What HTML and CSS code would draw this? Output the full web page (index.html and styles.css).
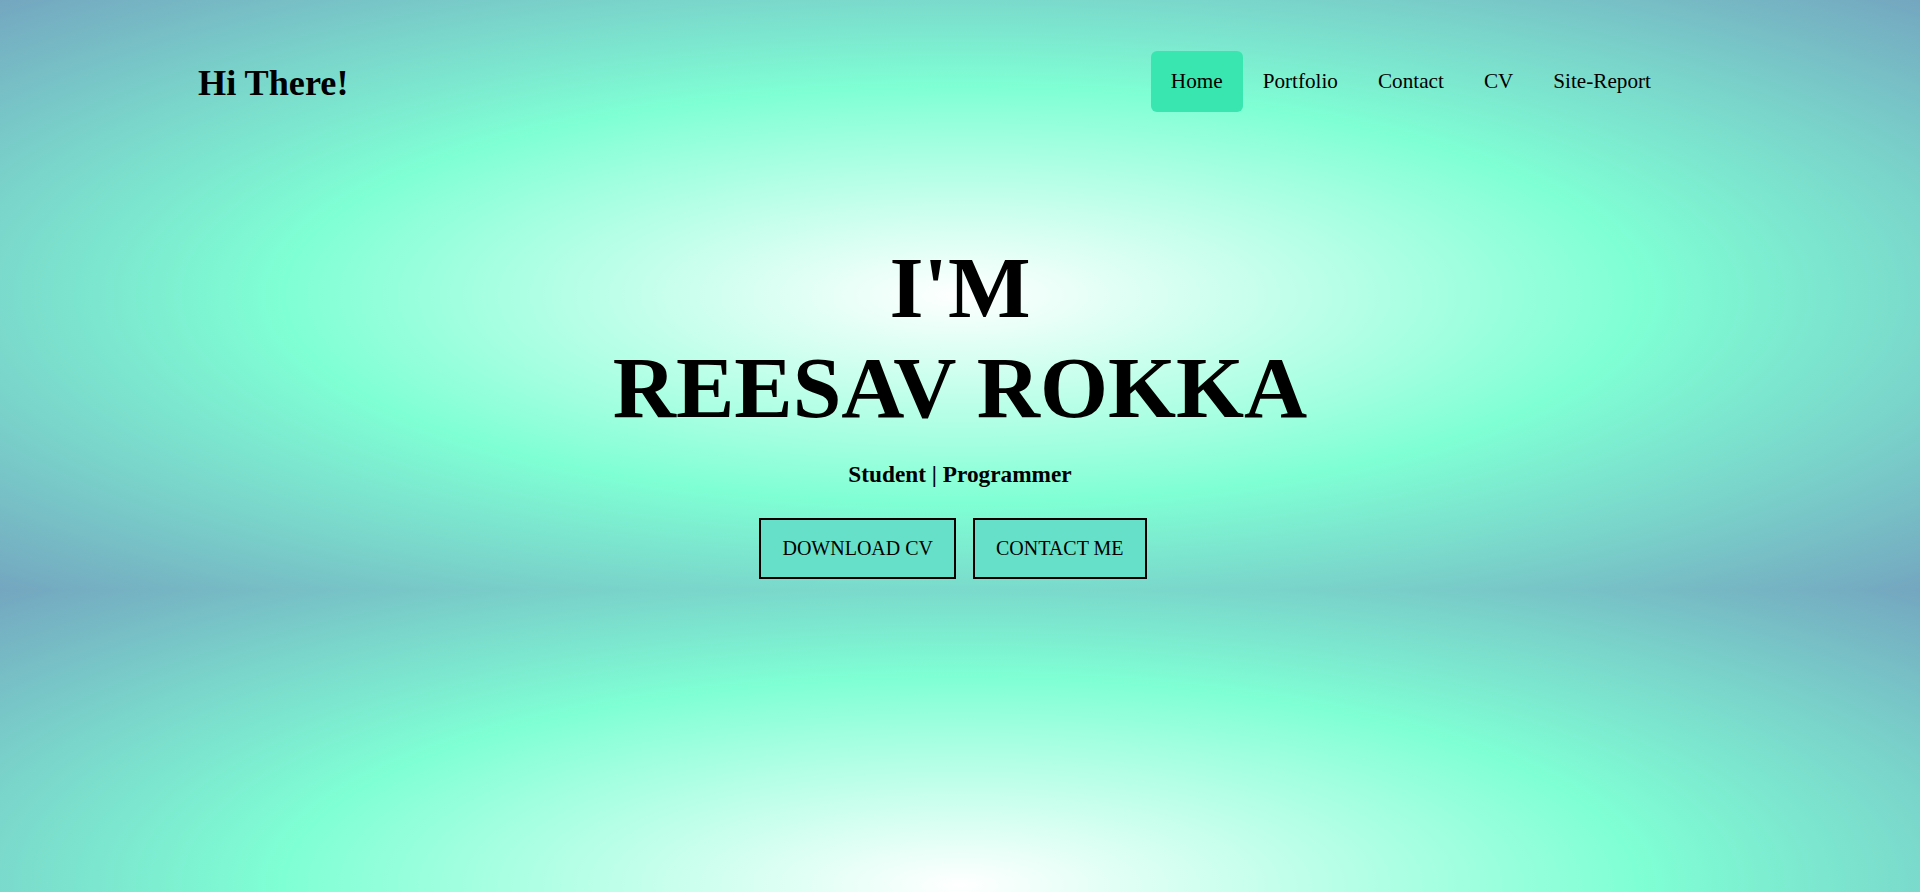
FILE: index.html
```html
<!DOCTYPE html>
<html lang="en">
<head>
<meta charset="utf-8">
<title>Reesav Rokka</title>
<link rel="stylesheet" href="styles.css">
</head>
<body>
<div class="page">
  <header class="site-header">
    <h1 class="logo">Hi There!</h1>
    <nav class="nav">
      <a class="nav-link active" href="#">Home</a>
      <a class="nav-link" href="#">Portfolio</a>
      <a class="nav-link" href="#">Contact</a>
      <a class="nav-link" href="#">CV</a>
      <a class="nav-link" href="#">Site-Report</a>
    </nav>
  </header>
  <main class="hero">
    <h2 class="hero-title">I'M<br>REESAV ROKKA</h2>
    <p class="hero-sub">Student | Programmer</p>
    <div class="hero-actions">
      <a class="btn" href="#">DOWNLOAD CV</a>
      <a class="btn" href="#">CONTACT ME</a>
    </div>
  </main>
</div>
</body>
</html>
```
FILE: styles.css
```css
body {
  margin: 0;
  font-family: "Liberation Serif", "Times New Roman", serif;
  color: #000;
}

.page {
  min-height: 892px;
  background-color: #7fffd4;
  background-image: radial-gradient(ellipse farthest-corner at 50% 50%, #ffffff 0%, #7fffd4 50%, #74a6c0 100%);
  background-size: 100% 590px;
  background-repeat: repeat-y;
  overflow: hidden;
}

.site-header {
  display: flex;
  justify-content: space-between;
  align-items: center;
  padding: 51px 249px 0 198px;
}

.logo {
  margin: 3px 0 0;
  font-size: 36.2px;
  font-weight: bold;
  line-height: normal;
}

.nav {
  display: flex;
}

.nav-link {
  font-size: 21.2px;
  line-height: normal;
  padding: 18px 20px;
  color: #000;
  text-decoration: none;
  border-radius: 6px;
}

.nav-link.active {
  background: #3ae6af;
}

.hero {
  display: flex;
  flex-direction: column;
  align-items: center;
  margin-top: 126px;
}

.hero-title {
  margin: 0;
  font-size: 87.5px;
  line-height: 100px;
  font-weight: bold;
  text-align: center;
}

.hero-sub {
  margin: 23px 0 0;
  font-size: 23.3px;
  font-weight: bold;
  line-height: normal;
}

.hero-actions {
  display: flex;
  gap: 17px;
  margin-top: 30px;
  padding-right: 14px;
}

.btn {
  padding: 17px 21px;
  border: 2px solid #000;
  background: #66e0c8;
  color: #000;
  font-size: 20px;
  line-height: normal;
  text-decoration: none;
}
```
